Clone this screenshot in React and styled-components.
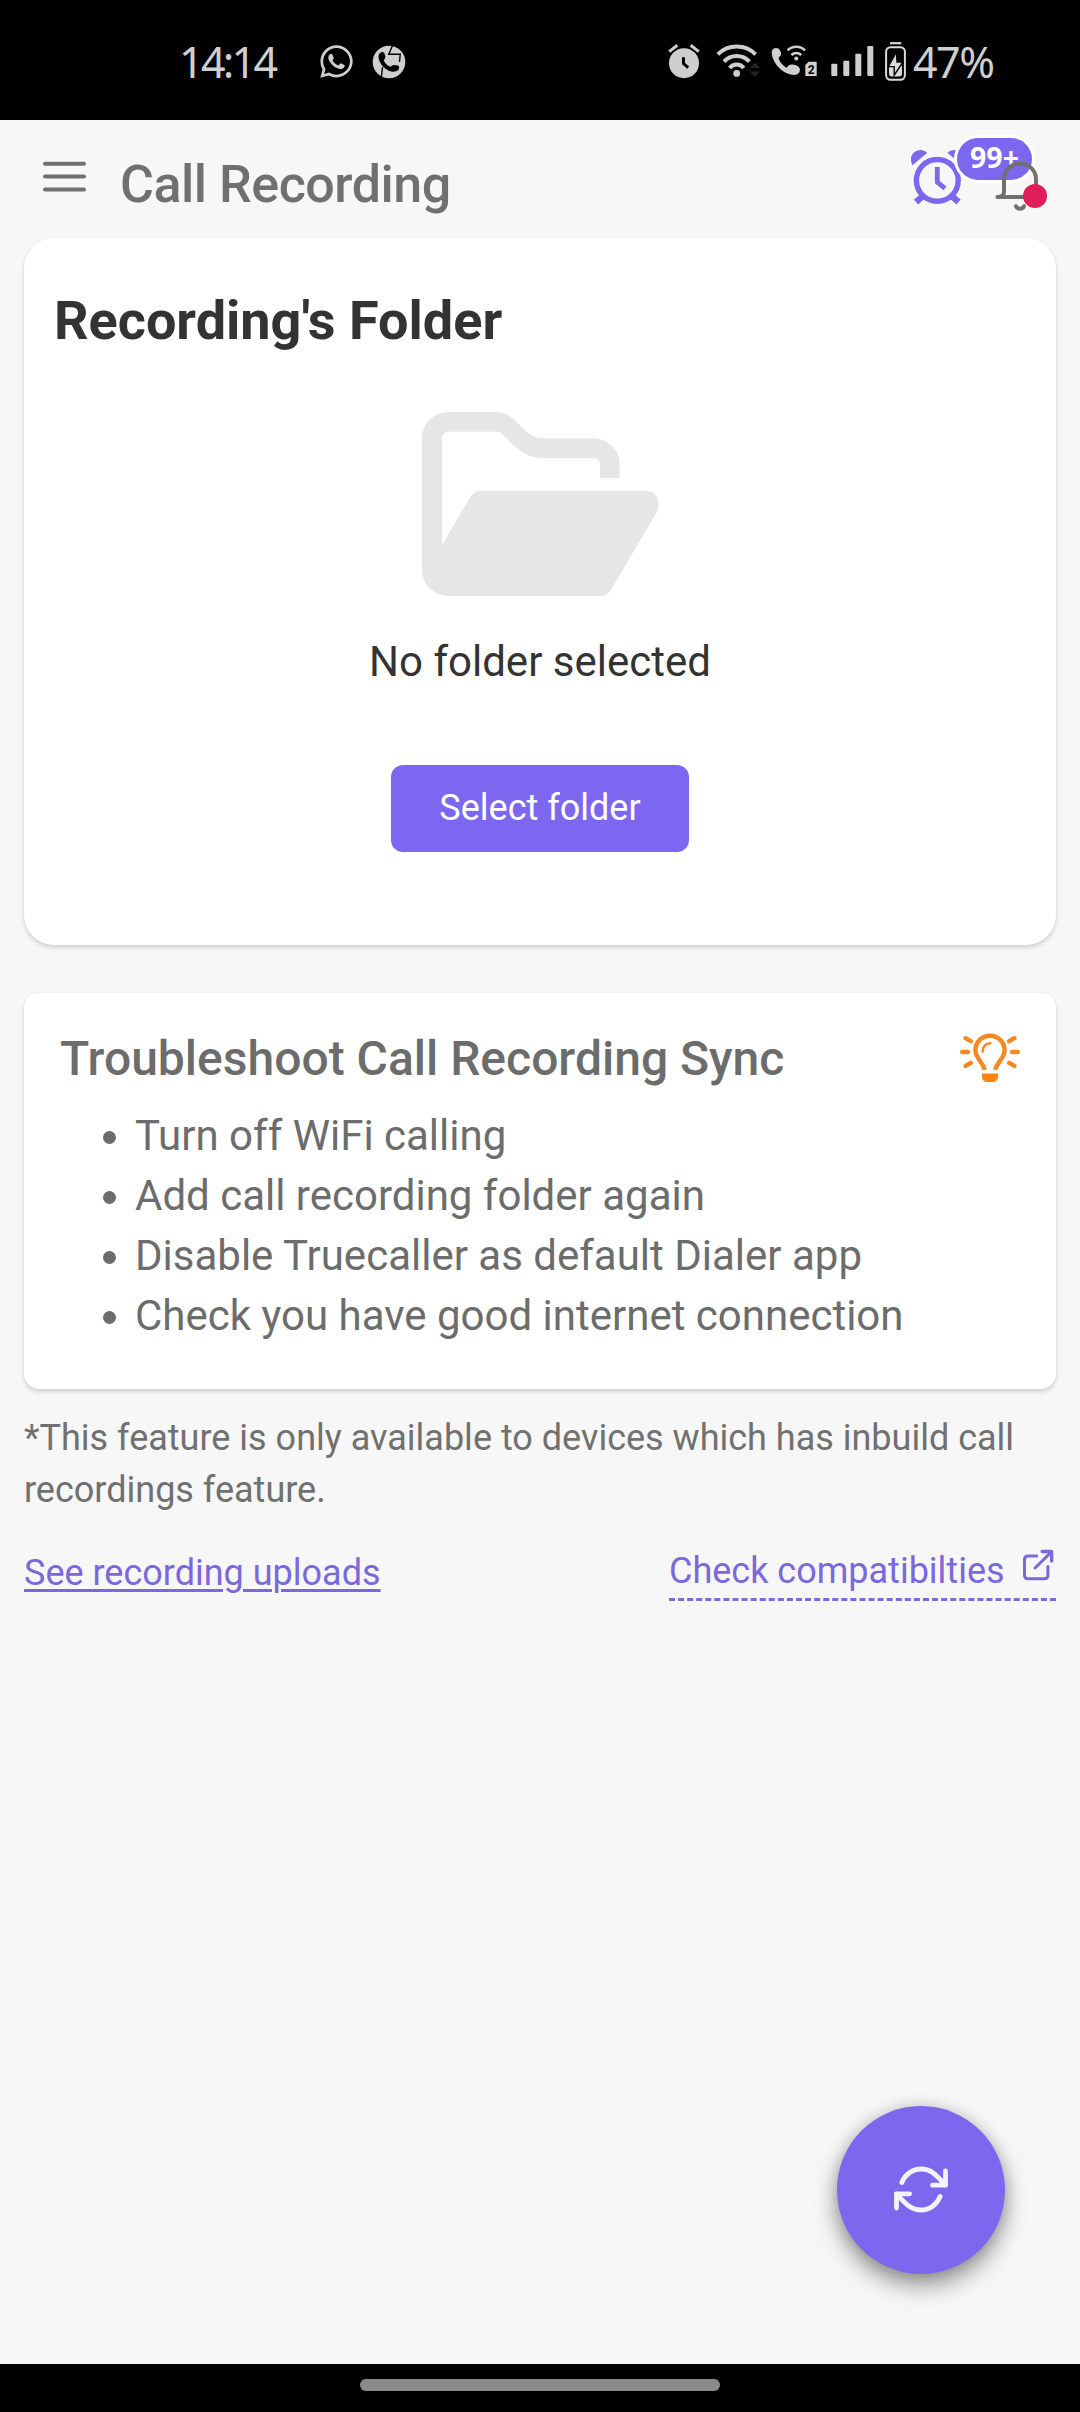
import React from "react";
import styled, { createGlobalStyle } from "styled-components";
import { FaWhatsapp } from "react-icons/fa";

const Global = createGlobalStyle`
  * { box-sizing: border-box; }
  body { margin: 0; background: #f7f7f7; }
  h1, h2, p, ul { margin: 0; padding: 0; }
  svg { display: block; flex: none; }
`;

const Screen = styled.div`
  position: relative;
  display: flex;
  flex-direction: column;
  width: 1080px;
  height: 2412px;
  background: #f7f7f7;
  font-family: Roboto, "Liberation Sans", sans-serif;
  color: #6e6e6e;
  overflow: hidden;
`;

const StatusBar = styled.div`
  display: flex;
  justify-content: space-between;
  height: 120px;
  padding: 0 86px 0 179px;
  background: #000;
  color: #cfcfcf;
`;

const StatusGroup = styled.div`
  display: flex;
  align-items: flex-start;
`;

const StatusText = styled.span`
  font-family: "Noto Sans", sans-serif;
  font-size: 43px;
  line-height: 60px;
  margin-top: 32px;
  white-space: nowrap;
  letter-spacing: ${(p) => p.$spacing}px;
  width: ${(p) => p.$width}px;
`;

const StatusIcon = styled.span`
  margin: ${(p) => p.$top}px 0 0 ${(p) => p.$left}px;
`;

const Header = styled.header`
  display: flex;
  align-items: flex-start;
  justify-content: space-between;
  height: 118px;
  padding: 0 31px 0 43px;
`;

const HeaderLeft = styled.div`
  display: flex;
  gap: 34px;
`;

const MenuButton = styled.span`
  margin-top: 41px;
`;

const PageTitle = styled.h1`
  margin-top: 35px;
  font-size: 52px;
  line-height: 60px;
  font-weight: 500;
  letter-spacing: -0.48px;
  color: #707070;
  white-space: nowrap;
`;

const HeaderActions = styled.div`
  display: flex;
  gap: 31px;
`;

const AlarmButton = styled.div`
  position: relative;
  margin-top: 28px;
  width: 54px;
`;

const CountBadge = styled.span`
  position: absolute;
  top: -13px;
  left: 44px;
  width: 81px;
  height: 48px;
  border: 3px solid #fff;
  border-radius: 24px;
  background: #7b68ee;
  color: #fff;
  font-family: "Noto Sans", sans-serif;
  font-weight: 700;
  font-size: 28.5px;
  line-height: 39px;
  text-align: center;
`;

const BellButton = styled.div`
  position: relative;
  margin-top: 41px;
  width: 54px;
`;

const AlertDot = styled.span`
  position: absolute;
  left: 28px;
  top: 23px;
  width: 24px;
  height: 24px;
  border-radius: 50%;
  background: #e01f5a;
`;

const Main = styled.main`
  flex: 1;
  padding: 0 24px;
`;

const Card = styled.section`
  background: #fff;
  box-shadow: 0 3px 4px rgba(0, 0, 0, 0.15), 0 0 3px rgba(0, 0, 0, 0.05);
`;

const FolderCard = styled(Card)`
  height: 707px;
  padding: 51px 30px 0;
  border-radius: 30px;
`;

const FolderTitle = styled.h2`
  font-size: 54px;
  line-height: 64px;
  font-weight: 700;
  color: #333;
`;

const EmptyState = styled.div`
  display: flex;
  flex-direction: column;
  align-items: center;
  margin-top: 59px;
`;

const FolderArt = styled.div`
  padding-left: 2px;
`;

const EmptyText = styled.p`
  margin-top: 40px;
  font-size: 42px;
  line-height: 50px;
  color: #333;
`;

const SelectButton = styled.button`
  margin-top: 78px;
  width: 298px;
  height: 87px;
  padding: 0 0 1px;
  border: 0;
  border-radius: 12px;
  background: #7e67f0;
  color: #fff;
  font: 400 36px/42px Roboto, sans-serif;
`;

const TipsCard = styled(Card)`
  height: 396px;
  margin-top: 48px;
  padding: 38px 36px 0;
  border-radius: 15px;
`;

const TipsHeader = styled.div`
  display: flex;
  justify-content: space-between;
  align-items: flex-start;
`;

const TipsTitle = styled.h2`
  font-size: 48px;
  line-height: 56px;
  font-weight: 500;
  color: #6c6c6c;
`;

const TipIcon = styled.span`
  margin-top: 2px;
`;

const TipsList = styled.ul`
  margin-top: 19px;
  padding-left: 43px;
  list-style: none;
`;

const Tip = styled.li`
  display: flex;
  align-items: center;
  gap: 19px;
  font-size: 42px;
  line-height: 60px;
  color: #6c6c6c;
  &::before {
    content: "";
    width: 13px;
    height: 13px;
    margin-top: 2px;
    border-radius: 50%;
    background: #6c6c6c;
  }
`;

const Note = styled.p`
  margin-top: 23px;
  font-size: 36px;
  line-height: 52px;
  color: #707070;
`;

const LinkRow = styled.div`
  display: flex;
  justify-content: space-between;
  align-items: flex-start;
  margin-top: 32px;
`;

const UploadsLink = styled.a`
  margin-top: 3px;
  font-size: 36px;
  line-height: 44px;
  color: #7b68dd;
  text-decoration: underline;
  text-decoration-thickness: 3px;
  text-underline-offset: 4px;
`;

const CompatLink = styled.a`
  display: flex;
  justify-content: space-between;
  width: 387px;
  height: 53px;
  border-bottom: 3px dashed #7b68dd;
  font-size: 36px;
  line-height: 46px;
  color: #7b68dd;
`;

const LinkIcon = styled.span`
  margin: 1px 1px 0 0;
`;

const SyncButton = styled.button`
  position: absolute;
  left: 837px;
  top: 2106px;
  display: flex;
  align-items: center;
  justify-content: center;
  width: 168px;
  height: 168px;
  padding: 0;
  border: 0;
  border-radius: 50%;
  background: #7b68ee;
  box-shadow: 0 12px 24px rgba(0, 0, 0, 0.36), 0 2px 16px rgba(0, 0, 0, 0.18);
`;

const NavBar = styled.footer`
  display: flex;
  justify-content: center;
  height: 48px;
  padding-top: 15px;
  background: #000;
`;

const NavHandle = styled.span`
  width: 360px;
  height: 12px;
  border-radius: 6px;
  background: #8a8a8a;
`;

const CallBadgeIcon = () => (
  <svg width="34" height="34" viewBox="0 0 34 34">
    <circle cx="17" cy="17" r="16.3" fill="#cfcfcf" />
    <g fill="none" stroke="#000" strokeWidth="1.4">
      <path d="M20.5 0.5L16.8 9.3H28.2L27.5 17" />
      <path d="M10.6 22L9.2 33" />
    </g>
    <path d="M7.5 8.6C9 6.3 12 6.6 12.6 8.8L13.4 12C13.6 13.6 11.6 14.4 12 15.8C13 18.4 15.6 20.8 18 21.6C19.4 22 20.2 20 21.8 20L25.8 20.6C27.8 21.2 27.6 24.2 25.6 25.6C22 28 15.6 26.4 11 21.4C7 17 5.4 12 7.5 8.6Z" fill="#000" />
  </svg>
);

const StatusAlarm = () => (
  <svg width="32" height="35" viewBox="0 0 32 35" fill="none">
    <circle cx="16" cy="19.2" r="15" fill="#cfcfcf" />
    <path d="M1.2 7.6L9.3 1.2M22.7 1.2L30.8 7.6" stroke="#cfcfcf" strokeWidth="3" />
    <path d="M15.5 13.2V19.6L20.2 23.6" stroke="#000" strokeWidth="3" />
  </svg>
);

const StatusWifi = () => (
  <svg width="45" height="36" viewBox="0 0 45 36" fill="none">
    <g stroke="#cfcfcf" strokeWidth="4">
      <path d="M1.8 12.4A26.7 26.7 0 0 1 39.6 12.4" />
      <path d="M8 19.7A17 17 0 0 1 33.4 19.7" />
      <path d="M13.6 26A9 9 0 0 1 27.8 26" />
    </g>
    <circle cx="20.7" cy="31.4" r="3.4" fill="#cfcfcf" />
    <path d="M34 26L39 20.5L44 26ZM34 29.5L39 35L44 29.5Z" fill="#242424" />
  </svg>
);

const StatusCalling = () => (
  <svg width="46" height="34" viewBox="0 0 46 34" fill="none">
    <path d="M2 5.2C4.4 3.2 7.4 3.8 9 6.4C10.4 8.8 10.6 11.4 8.4 12.8C7.2 13.8 7.6 15.4 9 17.6C10.8 20.4 13.4 22.8 15.8 23.8C17.6 20.6 19.4 20 23 20.8C27.2 21.6 29.6 24 28.8 27C28 30 25 31.4 21 30.8C13 29.6 6 23.4 2.6 16C0.6 11.4 0 7 2 5.2Z" fill="#cfcfcf" />
    <g stroke="#cfcfcf" strokeWidth="2.6">
      <path d="M16.6 6.4A12.2 12.2 0 0 1 34 6.4" />
      <path d="M20.4 11A7 7 0 0 1 30.2 11" />
    </g>
    <circle cx="25.3" cy="14.4" r="2" fill="#cfcfcf" />
    <path d="M37.6 17.8H45.7V32H34.3V21Z" fill="#cfcfcf" />
    <text x="36.8" y="29.6" fontFamily="Roboto, sans-serif" fontWeight="700" fontSize="12" fill="#000">2</text>
  </svg>
);

const StatusSignal = () => (
  <svg width="43" height="30" viewBox="0 0 43 30" fill="#cfcfcf">
    <rect x="0.3" y="17.8" width="6" height="12.2" rx="1" />
    <rect x="12.3" y="14.8" width="6" height="15.2" rx="1" />
    <rect x="24.3" y="7.8" width="6" height="22.2" rx="1" />
    <rect x="36.3" y="0" width="6" height="30" rx="1" />
  </svg>
);

const StatusBattery = () => (
  <svg width="21" height="39" viewBox="0 0 21 39" fill="none">
    <path d="M5 1.2H16.3" stroke="#dadada" strokeWidth="2.2" />
    <rect x="1.1" y="5.2" width="18.8" height="32.6" rx="4.5" stroke="#dadada" strokeWidth="2" />
    <path d="M4 24H17V31.5Q17 34.5 14 34.5H7Q4 34.5 4 31.5Z" fill="#dadada" />
    <path d="M11.5 9.8L3.2 24.6H9.2V33.2L18 20H12Z" fill="#dadada" stroke="#000" strokeWidth="1.4" />
  </svg>
);

const MenuIcon = () => (
  <svg width="43" height="32" viewBox="0 0 43 32" stroke="#707070" strokeWidth="4" strokeLinecap="round">
    <path d="M2 2.8H41M2 15.6H41M2 28.4H41" />
  </svg>
);

const AlarmIcon = () => (
  <svg width="54" height="58" viewBox="0 0 54 58" fill="none" stroke="#7b68ee">
    <circle cx="27.3" cy="32.4" r="20.9" strokeWidth="5.4" />
    <path d="M27.3 19V34.2L35 40.4" strokeWidth="4.8" />
    <path d="M12.6 48.4L6 54M42 48.4L48.6 54" strokeWidth="6.4" />
    <path d="M2.5 17.2C-1.4 10 2.6 2 10.6 2Q14.4 2 17.2 4.7ZM52.1 17.2C56 10 52 2 44 2Q40.2 2 37.4 4.7Z" fill="#7b68ee" stroke="none" />
  </svg>
);

const BellIcon = () => (
  <svg width="54" height="52" viewBox="0 0 54 52" fill="none" stroke="#707070" strokeWidth="4" strokeLinecap="round" strokeLinejoin="round">
    <path d="M9 31V18.5C9 9.4 16 2.6 25 2.6C34 2.6 41 9.4 41 18.5V31C41 34 43 36 46 36H2.4C6 36 9 34.5 9 31Z" />
    <path d="M21 45.2C22.4 48.6 27.6 48.6 29 45.2" />
  </svg>
);

const FolderIcon = () => (
  <svg width="238" height="185" viewBox="0 0 238 185" fill="#e6e6e6">
    <path d="M26.3 0H74.7C82 0 87.5 3.2 93 8.7L104.7 20C109.5 24.2 114.5 26.3 121.3 26.3H171.3C186 26.3 197.6 38 197.6 52V66H178V52C178 48.4 175.2 46 171.3 46H121.3C109 46 99 40.8 91.3 33L80.7 22.4C79 20.6 77.4 19.8 74.7 19.8H26.3C22.6 19.8 20 22.6 20 26.3V133L48.2 85.2C50.8 81 54.4 78.8 59 78.8H223.7C234.4 78.8 240 90.4 234.6 100.4L188.8 178C186.6 181.8 183.8 183.9 179.7 183.9H26.3C11.8 183.9 0 172 0 157.6V26.3C0 11.8 11.8 0 26.3 0Z" />
  </svg>
);

const BulbIcon = () => (
  <svg width="60" height="50" viewBox="0 0 60 50" fill="none" stroke="#f58820" strokeWidth="4.4" strokeLinecap="round">
    <path d="M24.6 36.8C23.4 29.6 15.4 25.4 15.4 17.3C15.4 9 22 2.8 30 2.8C38 2.8 44.6 9 44.6 17.3C44.6 25.4 36.6 29.6 35.2 36.8" strokeLinecap="butt" />
    <path d="M22.6 18.4C22.8 13.4 26 10.4 30.4 10.2" strokeWidth="2.6" />
    <path d="M2.2 19H8M52 19H57.8M5.6 5.2L10.8 8.2M54.4 5.2L49.2 8.2M5.6 32.8L10.8 29.8M54.4 32.8L49.2 29.8" />
    <path d="M21.9 40.4H38.1V43C38.1 46 36 49 33.4 49H26.6C24 49 21.9 46 21.9 43Z" fill="#ff8412" stroke="none" />
  </svg>
);

const ExternalIcon = () => (
  <svg width="33" height="33" viewBox="0 0 33 33" fill="none" stroke="#7b68dd" strokeWidth="3" strokeLinecap="round" strokeLinejoin="round">
    <path d="M14.6 7H6Q2.5 7 2.5 10.5V26.2Q2.5 29.7 6 29.7H22.4Q25.9 29.7 25.9 26.2V17.4" />
    <path d="M13 19L29.4 2.9" />
    <path d="M20.2 2.5H29.6V12" strokeWidth="3.4" />
  </svg>
);

const SyncIcon = () => (
  <svg width="54" height="48" viewBox="0 0 54 48" fill="none" stroke="#f4f2fb" strokeWidth="4.8" strokeLinecap="round" strokeLinejoin="round">
    <path d="M7.8 16.6C11 8.6 18.4 3 27 3C37.6 3 42.6 9.6 51.4 19" />
    <path d="M51.5 5V19.2H38.4" />
    <path d="M46.2 30.4C43 38.4 35.6 44 27 44C16.4 44 11.4 37.4 2.6 28" />
    <path d="M2.5 42V27.8H15.6" />
  </svg>
);

const TIPS = [
  "Turn off WiFi calling",
  "Add call recording folder again",
  "Disable Truecaller as default Dialer app",
  "Check you have good internet connection",
];

export default function App() {
  return (
    <Screen>
      <Global />
      <StatusBar>
        <StatusGroup>
          <StatusText $spacing={-2.7} $width={101}>14:14</StatusText>
          <StatusIcon $top={43} $left={38}><FaWhatsapp size={37} /></StatusIcon>
          <StatusIcon $top={45} $left={17}><CallBadgeIcon /></StatusIcon>
        </StatusGroup>
        <StatusGroup>
          <StatusIcon $top={44} $left={0}><StatusAlarm /></StatusIcon>
          <StatusIcon $top={42} $left={16}><StatusWifi /></StatusIcon>
          <StatusIcon $top={44} $left={10}><StatusCalling /></StatusIcon>
          <StatusIcon $top={46} $left={14}><StatusSignal /></StatusIcon>
          <StatusIcon $top={42} $left={11}><StatusBattery /></StatusIcon>
          <StatusIcon $top={0} $left={7} />
          <StatusText $spacing={-1.5} $width={81}>47%</StatusText>
        </StatusGroup>
      </StatusBar>

      <Header>
        <HeaderLeft>
          <MenuButton><MenuIcon /></MenuButton>
          <PageTitle>Call Recording</PageTitle>
        </HeaderLeft>
        <HeaderActions>
          <AlarmButton>
            <AlarmIcon />
            <CountBadge>99+</CountBadge>
          </AlarmButton>
          <BellButton>
            <BellIcon />
            <AlertDot />
          </BellButton>
        </HeaderActions>
      </Header>

      <Main>
        <FolderCard>
          <FolderTitle>Recording's Folder</FolderTitle>
          <EmptyState>
            <FolderArt><FolderIcon /></FolderArt>
            <EmptyText>No folder selected</EmptyText>
            <SelectButton>Select folder</SelectButton>
          </EmptyState>
        </FolderCard>

        <TipsCard>
          <TipsHeader>
            <TipsTitle>Troubleshoot Call Recording Sync</TipsTitle>
            <TipIcon><BulbIcon /></TipIcon>
          </TipsHeader>
          <TipsList>
            {TIPS.map((tip) => (
              <Tip key={tip}>{tip}</Tip>
            ))}
          </TipsList>
        </TipsCard>

        <Note>*This feature is only available to devices which has inbuild call recordings feature.</Note>

        <LinkRow>
          <UploadsLink>See recording uploads</UploadsLink>
          <CompatLink>
            Check compatibilties
            <LinkIcon><ExternalIcon /></LinkIcon>
          </CompatLink>
        </LinkRow>
      </Main>

      <SyncButton aria-label="Sync">
        <SyncIcon />
      </SyncButton>

      <NavBar>
        <NavHandle />
      </NavBar>
    </Screen>
  );
}
